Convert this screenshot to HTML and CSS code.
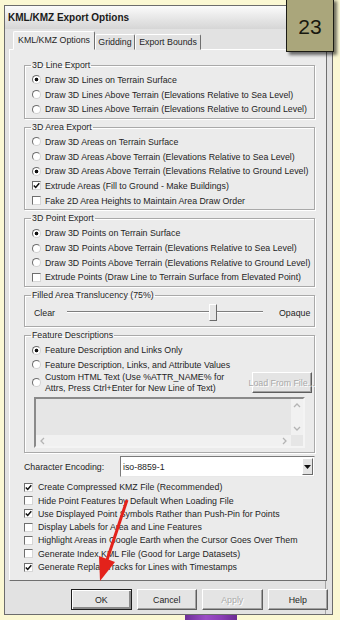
FILE: index.html
```html
<!DOCTYPE html>
<html lang="en">
<head>
  <meta charset="UTF-8">
  <title>KML/KMZ Export Options</title>
  <link rel="stylesheet" href="styles.css">
</head>
<body>

<div class="screen">

  <div class="badge">23</div>

  <div class="dialog">
    <div class="titlebar">KML/KMZ Export Options</div>

    <div class="tabs">
      <div class="tab active">KML/KMZ Options</div>
      <div class="tab t-grid">Gridding</div>
      <div class="tab t-bounds">Export Bounds</div>
    </div>

    <div class="panel">

      <!-- 3D Line Export -->
      <fieldset class="group">
        <legend>3D Line Export</legend>
        <div class="opt"><span class="radio on"></span>Draw 3D Lines on Terrain Surface</div>
        <div class="opt"><span class="radio"></span>Draw 3D Lines Above Terrain (Elevations Relative to Sea Level)</div>
        <div class="opt"><span class="radio"></span>Draw 3D Lines Above Terrain (Elevations Relative to Ground Level)</div>
      </fieldset>

      <!-- 3D Area Export -->
      <fieldset class="group">
        <legend>3D Area Export</legend>
        <div class="opt"><span class="radio"></span>Draw 3D Areas on Terrain Surface</div>
        <div class="opt"><span class="radio"></span>Draw 3D Areas Above Terrain (Elevations Relative to Sea Level)</div>
        <div class="opt"><span class="radio on"></span>Draw 3D Areas Above Terrain (Elevations Relative to Ground Level)</div>
        <div class="opt"><span class="check"><svg width="7" height="7" viewBox="0 0 7 7"><path d="M0.8 3.4 L2.7 5.4 L6.3 1.2" fill="none" stroke="#111" stroke-width="1.5"/></svg></span>Extrude Areas (Fill to Ground - Make Buildings)</div>
        <div class="opt"><span class="check"></span>Fake 2D Area Heights to Maintain Area Draw Order</div>
      </fieldset>

      <!-- 3D Point Export -->
      <fieldset class="group">
        <legend>3D Point Export</legend>
        <div class="opt"><span class="radio on"></span>Draw 3D Points on Terrain Surface</div>
        <div class="opt"><span class="radio"></span>Draw 3D Points Above Terrain (Elevations Relative to Sea Level)</div>
        <div class="opt"><span class="radio"></span>Draw 3D Points Above Terrain (Elevations Relative to Ground Level)</div>
        <div class="opt"><span class="check"></span>Extrude Points (Draw Line to Terrain Surface from Elevated Point)</div>
      </fieldset>

      <!-- Translucency -->
      <fieldset class="group slider-group">
        <legend>Filled Area Translucency (75%)</legend>
        <div class="slider-row">
          <span class="clear">Clear</span>
          <div class="slider"><div class="thumb"></div></div>
          <span class="opaque">Opaque</span>
        </div>
      </fieldset>

      <!-- Feature Descriptions -->
      <fieldset class="group desc-group">
        <legend>Feature Descriptions</legend>
        <div class="opt"><span class="radio on"></span>Feature Description and Links Only</div>
        <div class="opt"><span class="radio"></span>Feature Description, Links, and Attribute Values</div>
        <div class="opt custom">
          <span class="radio"></span>
          <span class="custom-text">Custom HTML Text (Use %ATTR_NAME% for<br>Attrs, Press Ctrl+Enter for New Line of Text)</span>
          <span class="btn load">Load From File...</span>
        </div>
        <div class="memo">
          <div class="memo-body"></div>
          <div class="vscroll">
            <svg width="8" height="6" viewBox="0 0 8 6"><path d="M1 5 L4 2 L7 5" fill="none" stroke="#b4b4b4" stroke-width="1.3"/></svg>
            <svg width="8" height="6" viewBox="0 0 8 6"><path d="M1 1 L4 4 L7 1" fill="none" stroke="#b4b4b4" stroke-width="1.3"/></svg>
          </div>
          <div class="hscroll">
            <svg width="6" height="8" viewBox="0 0 6 8"><path d="M5 1 L2 4 L5 7" fill="none" stroke="#b4b4b4" stroke-width="1.3"/></svg>
            <svg width="6" height="8" viewBox="0 0 6 8"><path d="M1 1 L4 4 L1 7" fill="none" stroke="#b4b4b4" stroke-width="1.3"/></svg>
          </div>
          <div class="corner"></div>
        </div>
      </fieldset>

      <div class="encoding">
        <span class="enc-label">Character Encoding:</span>
        <div class="select">
          <span>iso-8859-1</span>
          <span class="drop"><svg width="7" height="4" viewBox="0 0 7 4"><path d="M0 0 H7 L3.5 4 Z" fill="#111"/></svg></span>
        </div>
      </div>

      <div class="checks">
        <div class="opt"><span class="check"><svg width="7" height="7" viewBox="0 0 7 7"><path d="M0.8 3.4 L2.7 5.4 L6.3 1.2" fill="none" stroke="#111" stroke-width="1.5"/></svg></span>Create Compressed KMZ File (Recommended)</div>
        <div class="opt"><span class="check"></span>Hide Point Features by Default When Loading File</div>
        <div class="opt"><span class="check"><svg width="7" height="7" viewBox="0 0 7 7"><path d="M0.8 3.4 L2.7 5.4 L6.3 1.2" fill="none" stroke="#111" stroke-width="1.5"/></svg></span>Use Displayed Point Symbols Rather than Push-Pin for Points</div>
        <div class="opt"><span class="check"></span>Display Labels for Area and Line Features</div>
        <div class="opt"><span class="check"></span>Highlight Areas in Google Earth when the Cursor Goes Over Them</div>
        <div class="opt"><span class="check"></span>Generate Index KML File (Good for Large Datasets)</div>
        <div class="opt"><span class="check"><svg width="7" height="7" viewBox="0 0 7 7"><path d="M0.8 3.4 L2.7 5.4 L6.3 1.2" fill="none" stroke="#111" stroke-width="1.5"/></svg></span>Generate Replay Tracks for Lines with Timestamps</div>
      </div>

    </div>

    <div class="buttons">
      <span class="btn default">OK</span>
      <span class="btn">Cancel</span>
      <span class="btn disabled">Apply</span>
      <span class="btn">Help</span>
    </div>
  </div>

  <div class="dock"></div>

  <!-- red annotation arrow -->
  <svg class="arrow" width="340" height="620" viewBox="0 0 340 620">
    <line x1="127" y1="500" x2="107" y2="560" stroke="#e3221b" stroke-width="3"/>
    <polygon points="115,562 99,556 100,581" fill="#e3221b"/>
  </svg>

</div>

</body>
</html>
```

FILE: styles.css
```css
body {
  margin: 0;
  padding: 0;
  font-family: 'Liberation Sans', Arial, sans-serif;
  font-size: 8.8px;
  color: #1e1e1e;
}

.screen {
  position: relative;
  width: 340px;
  height: 620px;
  overflow: hidden;
  background: #fbf8d3;
  padding-top: 5px;
  box-sizing: border-box;
}

.dialog {
  margin-left: 4px;
  width: 329px;
  height: 610px;
  box-sizing: border-box;
  background: #e2e2e2;
  border: 1px solid #6c6c6c;
  box-shadow: inset -6px 0 0 #e2e2e2, inset -7px 0 0 #a4a4a4;
}

.titlebar {
  height: 23px;
  line-height: 23px;
  padding-left: 3px;
  font-size: 10px;
  font-weight: bold;
  color: #1a1a1a;
  background: linear-gradient(#fbfbfb, #e4e4e4 60%, #d6d6d6);
}

/* tabs */
.tabs {
  display: flex;
  align-items: flex-end;
  height: 19px;
  margin-top: 2px;
  margin-bottom: -1px;
  padding-left: 8px;
  position: relative;
  z-index: 1;
}

.tab {
  height: 16px;
  line-height: 15px;
  text-align: center;
  white-space: nowrap;
  box-sizing: border-box;
  border: 1px solid #8a8a8a;
  border-color: #fff #6f6f6f #e2e2e2 #fff;
  border-radius: 2px 2px 0 0;
  background: #e2e2e2;
}

.tab.active {
  width: 82px;
  height: 19px;
  line-height: 17px;
  background: #ebebeb;
  border-bottom-color: #ebebeb;
}

.t-grid {
  width: 40px;
}

.t-bounds {
  width: 66px;
}

/* main tab panel */
.panel {
  margin-left: 4px;
  width: 318px;
  height: 532px;
  box-sizing: border-box;
  background: #ebebeb;
  border: 1px solid;
  border-color: #fff #6f6f6f #6f6f6f #fff;
  padding: 9.5px 11px 0 14px;
}

.group {
  margin: 0 0 3px 0;
  padding: 2px 2px 1px 6px;
  border: 1px solid #a9a9a9;
  box-shadow: inset 1px 1px #fff, 1px 1px #fff;
  min-width: 0;
}

.group legend {
  padding: 0 1px;
  line-height: 11px;
  color: #262626;
}

.opt {
  display: flex;
  align-items: center;
  height: 14.7px;
  white-space: nowrap;
}

.radio {
  flex: none;
  width: 9px;
  height: 9px;
  margin: 0 4px 0 1px;
  box-sizing: border-box;
  border-radius: 50%;
  border: 1px solid;
  border-color: #6e6e6e #d2d2d2 #d2d2d2 #6e6e6e;
  background: #fff;
}

.radio.on {
  background: radial-gradient(circle, #111 0 1.5px, #fff 2.2px);
}

.check {
  flex: none;
  display: flex;
  align-items: center;
  justify-content: center;
  width: 9px;
  height: 9px;
  margin: 0 4px 0 1px;
  box-sizing: border-box;
  border: 1px solid;
  border-color: #6e6e6e #d6d6d6 #d6d6d6 #6e6e6e;
  background: #fff;
}

/* translucency slider */
.slider-group {
  padding-top: 1px;
  padding-bottom: 2px;
}

.slider-row {
  display: flex;
  align-items: center;
  height: 22px;
}

.clear {
  width: 33px;
  padding-left: 3px;
}

.slider {
  position: relative;
  width: 196px;
  height: 17px;
}

.slider::before {
  content: '';
  display: block;
  margin-top: 7px;
  height: 1px;
  background: #7e7e7e;
  border-bottom: 1px solid #fff;
}

.thumb {
  position: absolute;
  left: calc(75% - 5px);
  top: 0;
  width: 8px;
  height: 17px;
  box-sizing: border-box;
  background: #e6e6e6;
  border: 1px solid;
  border-color: #fff #6a6a6a #6a6a6a #fff;
}

.opaque {
  margin-left: 16px;
}

/* feature descriptions */
.desc-group {
  padding-bottom: 4px;
}

.opt.custom {
  height: 21px;
}

.custom-text {
  line-height: 10.4px;
}

.load {
  margin-left: auto;
  width: 77px;
  height: 19px;
  color: #a9a9a9;
  text-shadow: 1px 1px #fff;
}

.memo {
  margin: 4px 0 0 3px;
  width: 271px;
  height: 51px;
  box-sizing: border-box;
  border: 2px solid;
  border-color: #8a8a8a #f4f4f4 #f4f4f4 #8a8a8a;
  display: grid;
  grid-template-columns: 1fr 12px;
  grid-template-rows: 1fr 11px;
  background: #e6e6e6;
}

.vscroll {
  display: flex;
  flex-direction: column;
  justify-content: space-between;
  align-items: center;
  padding: 3px 0;
  background: #f1f1f1;
}

.hscroll {
  display: flex;
  justify-content: space-between;
  align-items: center;
  padding: 0 3px;
  background: #f1f1f1;
}

.corner {
  background: #e6e6e6;
}

/* encoding row */
.encoding {
  display: flex;
  align-items: center;
  margin-top: 3px;
  height: 21px;
}

.enc-label {
  width: 96px;
}

.select {
  display: flex;
  align-items: center;
  justify-content: space-between;
  width: 195px;
  height: 21px;
  box-sizing: border-box;
  padding: 0 1px 0 2px;
  background: #fff;
  border: 1px solid;
  border-color: #7a7a7a #e8e8e8 #e8e8e8 #7a7a7a;
}

.drop {
  display: flex;
  align-items: center;
  justify-content: center;
  width: 11px;
  height: 17px;
  box-sizing: border-box;
  background: #e4e4e4;
  border: 1px solid;
  border-color: #fff #6a6a6a #6a6a6a #fff;
}

.checks {
  margin-top: 3.5px;
}

.checks .opt {
  height: 13.3px;
}

.checks .check {
  margin: 0 5px 0 0;
}

/* dialog buttons */
.buttons {
  display: flex;
  justify-content: flex-end;
  gap: 5px;
  margin-top: 8px;
  padding-right: 4px;
}

.btn {
  display: flex;
  align-items: center;
  justify-content: center;
  width: 60.5px;
  height: 21px;
  box-sizing: border-box;
  background: #e4e4e4;
  border: 1px solid;
  border-color: #fff #5e5e5e #5e5e5e #fff;
  box-shadow: inset -1px -1px #a2a2a2;
}

.btn.default {
  border-color: #1e1e1e;
  box-shadow: inset 1px 1px #fff, inset -2px -2px #8a8a8a;
}

.btn.disabled {
  color: #a9a9a9;
  text-shadow: 1px 1px #fff;
}

.dock {
  margin-left: 185px;
  width: 52px;
  height: 6px;
  background: linear-gradient(90deg, #6d2f97, #9b4cc6 40%, #8a3db5 70%, #6a2b92);
}

/* overlays */
.badge {
  position: absolute;
  left: 286px;
  top: -2px;
  width: 48px;
  height: 54px;
  box-sizing: border-box;
  background: #aaa67b;
  border: 1.5px solid #1b1b14;
  box-shadow: 3px 3px 3px rgba(0, 0, 0, 0.55);
  display: flex;
  align-items: center;
  justify-content: center;
  padding-top: 3px;
  font-size: 21px;
  color: #18180f;
  z-index: 3;
}

.arrow {
  position: absolute;
  left: 0;
  top: 0;
  pointer-events: none;
  z-index: 4;
}
```
